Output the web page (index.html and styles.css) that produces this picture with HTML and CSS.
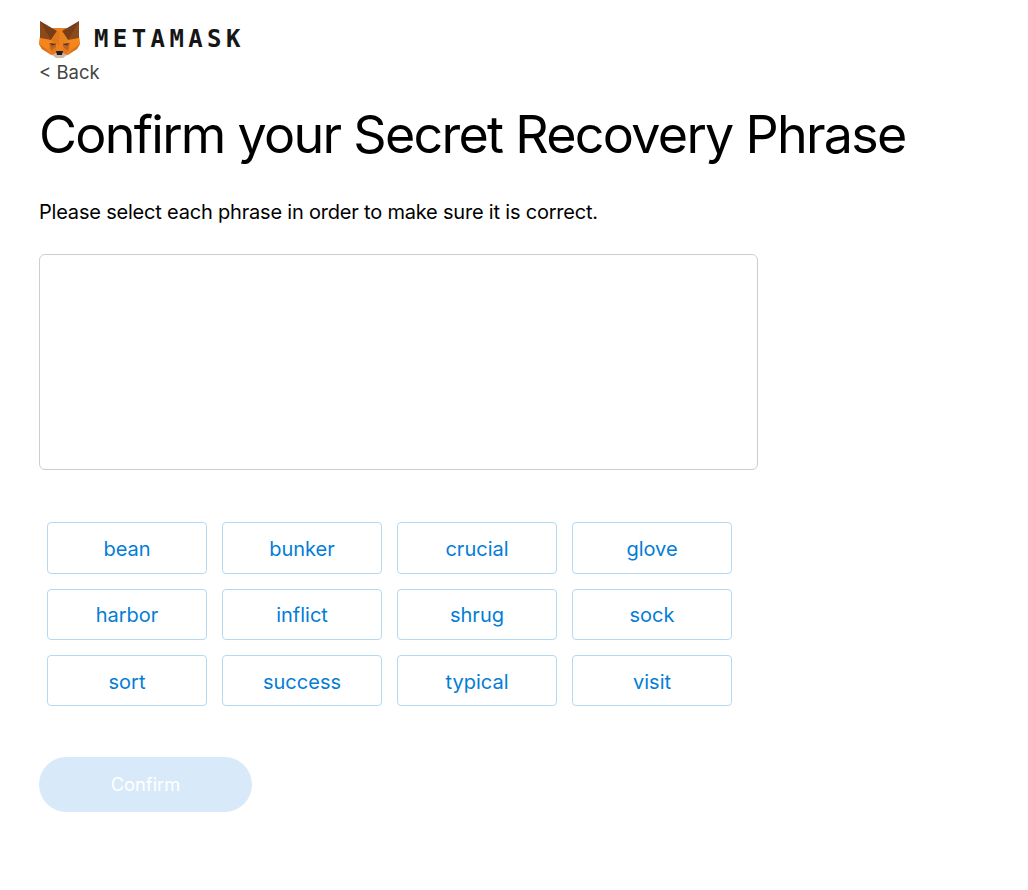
FILE: index.html
```html
<!DOCTYPE html>
<html lang="en">
<head>
<meta charset="utf-8">
<title>Confirm your Secret Recovery Phrase</title>
<link rel="stylesheet" href="styles.css">
</head>
<body>
<main class="page">
  <header class="logo">
    <svg class="fox" width="42" height="38" viewBox="0 0 42 38" aria-hidden="true">
      <polygon fill="#f0801f" points="1,16 14,8 27,8 40,16 41,24 38,29 29,35 12,35 3,29 0,24"/>
      <polygon fill="#763d16" points="1,1 18,11 12,20 1,18"/>
      <polygon fill="#763d16" points="40,1 23,11 29,20 40,18"/>
      <polygon fill="#8a4a1c" points="1,1 12,20 1,18"/>
      <polygon fill="#8a4a1c" points="40,1 29,20 40,18"/>
      <polygon fill="#e2761b" points="18,11 20.5,11 20.5,26 12,20"/>
      <polygon fill="#e8821e" points="23,11 20.5,11 20.5,26 29,20"/>
      <polygon fill="#f6851b" points="1,18 12,20 14,25 7,29 0,24"/>
      <polygon fill="#f6851b" points="40,18 29,20 27,25 34,29 41,24"/>
      <polygon fill="#d5701c" points="0,24 7,29 12,34 3,29"/>
      <polygon fill="#d5701c" points="41,24 34,29 29,34 38,29"/>
      <polygon fill="#c0631b" points="10,23 17,23 17,27 12,31"/>
      <polygon fill="#c0631b" points="31,23 24,23 24,27 29,31"/>
      <polygon fill="#3a3a42" points="11,23 17,24.5 13,25.5"/>
      <polygon fill="#3a3a42" points="30,23 24,24.5 28,25.5"/>
      <polygon fill="#e4761b" points="12,31 17,27 17,33 13,35"/>
      <polygon fill="#e4761b" points="29,31 24,27 24,33 28,35"/>
      <polygon fill="#cdb8a8" points="13,35 17,33 24,33 28,35 24,38 17,38"/>
      <polygon fill="#1d1d1d" points="17,31 24,31 23,35 18,35"/>
    </svg>
    <span class="wordmark">METAMASK</span>
  </header>
  <a class="back" href="#">&lt; Back</a>
  <h1 class="title">Confirm your Secret Recovery Phrase</h1>
  <p class="intro">Please select each phrase in order to make sure it is correct.</p>
  <div class="phrase-box"></div>
  <div class="words">
    <button class="word">bean</button>
    <button class="word">bunker</button>
    <button class="word">crucial</button>
    <button class="word">glove</button>
    <button class="word">harbor</button>
    <button class="word">inflict</button>
    <button class="word">shrug</button>
    <button class="word">sock</button>
    <button class="word">sort</button>
    <button class="word">success</button>
    <button class="word">typical</button>
    <button class="word">visit</button>
  </div>
  <button class="confirm" disabled>Confirm</button>
</main>
</body>
</html>
```

FILE: styles.css
```css
* { box-sizing: border-box; }
html, body { margin: 0; background: #fff; }
body { font-family: Inter, "Noto Sans", sans-serif; color: #000; }
.page { padding: 20px 0 0 39px; width: 1028px; height: 890px; overflow: hidden; }
.logo { display: flex; align-items: center; height: 38px; gap: 13px; }
.fox { flex: none; }
.wordmark { font-family: "DejaVu Sans Mono", monospace; font-weight: 700; font-size: 24px; letter-spacing: 4.4px; color: #161616; line-height: 38px; }
.back { display: block; height: 28px; font-size: 18.5px; line-height: 28px; color: #444; text-decoration: none; }
.title { margin: 16px 0 0; font-size: 52px; font-weight: 400; letter-spacing: -1.72px; line-height: 66px; height: 64px; white-space: nowrap; }
.intro { margin: 32px 0 0; font-size: 20px; letter-spacing: -0.2px; line-height: 29px; height: 28px; }
.phrase-box { margin-top: 28px; width: 719px; height: 216px; border: 1px solid #cdcdcd; border-radius: 6px; }
.words { margin: 52.2px 0 0 8px; width: 700px; display: grid; grid-template-columns: repeat(4, 160px); column-gap: 15px; row-gap: 15px; grid-auto-rows: 51.4px; }
.word { background: #fff; border: 1px solid #b3d9f3; border-radius: 4px; color: #037dd6; font-family: inherit; font-size: 20px; padding: 2px 0 0; }
.confirm { display: block; margin-top: 50.6px; width: 213px; height: 55px; border: 0; border-radius: 28px; background: #d8eaf9; color: #fff; font-family: inherit; font-size: 18.3px; }
```
